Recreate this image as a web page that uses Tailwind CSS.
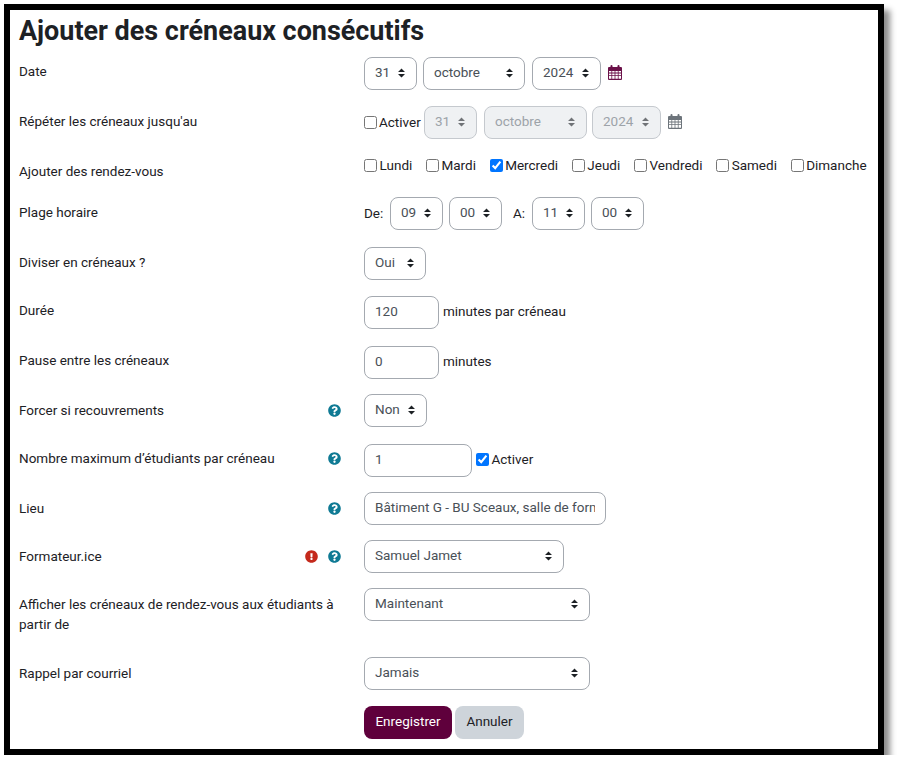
<!DOCTYPE html>
<html lang="fr">
<head>
<meta charset="utf-8">
<title>Ajouter des créneaux consécutifs</title>
<script src="https://cdn.jsdelivr.net/npm/@tailwindcss/browser@4"></script>
</head>
<body class="bg-white font-['Roboto',sans-serif] text-[13.5px] leading-[21px] text-[#1d2125]">
<svg class="hidden">
  <symbol id="arr" viewBox="0 0 7 10"><path d="M3.5 0.5 7 4H0Z M0 6H7L3.5 9.5Z" fill="#1d2125"/></symbol>
  <symbol id="cal" viewBox="0 0 14 15"><path fill="currentColor" fill-rule="evenodd" d="M1 2h1.5V1a1 1 0 0 1 2 0v1h5V1a1 1 0 0 1 2 0v1H13a1 1 0 0 1 1 1v11a1 1 0 0 1-1 1H1a1 1 0 0 1-1-1V3a1 1 0 0 1 1-1Zm0 4v1.6h2.4V6Zm3.2 0v1.6h2.4V6Zm3.2 0v1.6h2.4V6Zm3.2 0v1.6H13V6ZM1 8.4V10h2.4V8.4Zm3.2 0V10h2.4V8.4Zm3.2 0V10h2.4V8.4Zm3.2 0V10H13V8.4ZM1 10.8v1.6h0v1.4h2.4v-3Zm3.2 0v3h2.4v-3Zm3.2 0v3h2.4v-3Zm3.2 0v3H13v-3Z"/></symbol>
  <symbol id="q" viewBox="0 0 512 512"><path fill="#0f7a94" d="M504 256c0 136.997-111.043 248-248 248S8 392.997 8 256C8 119.083 119.043 8 256 8s248 111.083 248 248zM262.655 90c-54.497 0-89.255 22.957-116.549 63.758-3.536 5.286-2.353 12.415 2.715 16.258l34.699 26.31c5.205 3.947 12.621 3.008 16.665-2.122 17.864-22.658 30.113-35.797 57.303-35.797 20.429 0 45.698 13.148 45.698 32.958 0 14.976-12.363 22.667-32.534 33.976C247.128 238.528 216 254.941 216 296v4c0 6.627 5.373 12 12 12h56c6.627 0 12-5.373 12-12v-1.333c0-28.462 83.186-29.647 83.186-106.667 0-58.002-60.165-102-116.531-102zM256 338c-25.365 0-46 20.635-46 46 0 25.364 20.635 46 46 46s46-20.636 46-46c0-25.365-20.635-46-46-46z"/></symbol>
  <symbol id="e" viewBox="0 0 512 512"><path fill="#c4291c" d="M504 256c0 136.997-111.043 248-248 248S8 392.997 8 256C8 119.083 119.043 8 256 8s248 111.083 248 248zm-248 50c-25.405 0-46 20.595-46 46s20.595 46 46 46 46-20.595 46-46-20.595-46-46-46zm-43.673-165.346l7.418 136c.347 6.364 5.609 11.346 11.982 11.346h48.546c6.373 0 11.635-4.982 11.982-11.346l7.418-136c.375-6.874-5.098-12.654-11.982-12.654h-63.383c-6.884 0-12.356 5.78-11.981 12.654z"/></symbol>
</svg>

<div class="ml-[4px] mt-[4px] w-[880px] h-[751px] border-[6px] border-black bg-white pl-[9px] shadow-[6px_6px_6px_rgba(0,0,0,0.45)]">
  <h2 class="h-[47px] pt-[3px] text-[26.95px] leading-[36px] font-bold">Ajouter des créneaux consécutifs</h2>

  <div class="flex h-[49px]">
    <div class="w-[345px] shrink-0 pt-[4px]">Date</div>
    <div class="flex items-start">
      <div class="relative w-[53px] h-[33px]"><select class="appearance-none w-full h-full border border-[#a4a9b0] rounded-[8px] pl-[10px] pb-[2px] text-[#495057] bg-white"><option>31</option></select><svg class="absolute right-[12px] top-[11px] w-[7px] h-[10px]"><use href="#arr"/></svg></div>
      <div class="relative w-[102px] h-[33px] ml-[6px]"><select class="appearance-none w-full h-full border border-[#a4a9b0] rounded-[8px] pl-[10px] pb-[2px] text-[#495057] bg-white"><option>octobre</option></select><svg class="absolute right-[12px] top-[11px] w-[7px] h-[10px]"><use href="#arr"/></svg></div>
      <div class="relative w-[69px] h-[33px] ml-[7px]"><select class="appearance-none w-full h-full border border-[#a4a9b0] rounded-[8px] pl-[10px] pb-[2px] text-[#495057] bg-white"><option>2024</option></select><svg class="absolute right-[12px] top-[11px] w-[7px] h-[10px]"><use href="#arr"/></svg></div>
      <svg class="w-[14px] h-[15px] ml-[7px] mt-[8px] text-[#6b1149]"><use href="#cal"/></svg>
    </div>
  </div>

  <div class="flex h-[49px]">
    <div class="w-[345px] shrink-0 pt-[5px]">Répéter les créneaux jusqu'au</div>
    <div class="flex items-start">
      <label class="flex items-center h-[33px] w-[60px]"><input type="checkbox" class="mr-[2px]">Activer</label>
      <div class="relative w-[53px] h-[33px]"><select disabled class="appearance-none w-full h-full border border-[#c5c9ce] rounded-[8px] pl-[10px] pb-[2px] text-[#9da3a9] bg-[#eff1f3]"><option>31</option></select><svg class="absolute right-[12px] top-[11px] w-[7px] h-[10px] opacity-60"><use href="#arr"/></svg></div>
      <div class="relative w-[103px] h-[33px] ml-[7px]"><select disabled class="appearance-none w-full h-full border border-[#c5c9ce] rounded-[8px] pl-[10px] pb-[2px] text-[#9da3a9] bg-[#eff1f3]"><option>octobre</option></select><svg class="absolute right-[12px] top-[11px] w-[7px] h-[10px] opacity-60"><use href="#arr"/></svg></div>
      <div class="relative w-[69px] h-[33px] ml-[5px]"><select disabled class="appearance-none w-full h-full border border-[#c5c9ce] rounded-[8px] pl-[10px] pb-[2px] text-[#9da3a9] bg-[#eff1f3]"><option>2024</option></select><svg class="absolute right-[12px] top-[11px] w-[7px] h-[10px] opacity-60"><use href="#arr"/></svg></div>
      <svg class="w-[14px] h-[15px] ml-[7px] mt-[8px] text-[#6d747b]"><use href="#cal"/></svg>
    </div>
  </div>

  <div class="flex h-[42px]">
    <div class="w-[345px] shrink-0 pt-[6px]">Ajouter des rendez-vous</div>
    <div class="flex items-start gap-[13.7px]">
      <label class="flex items-center h-[21px]"><input type="checkbox" class="mr-[2.5px]">Lundi</label>
      <label class="flex items-center h-[21px]"><input type="checkbox" class="mr-[2.5px]">Mardi</label>
      <label class="flex items-center h-[21px]"><input type="checkbox" checked class="mr-[2.5px]">Mercredi</label>
      <label class="flex items-center h-[21px]"><input type="checkbox" class="mr-[2.5px]">Jeudi</label>
      <label class="flex items-center h-[21px]"><input type="checkbox" class="mr-[2.5px]">Vendredi</label>
      <label class="flex items-center h-[21px]"><input type="checkbox" class="mr-[2.5px]">Samedi</label>
      <label class="flex items-center h-[21px]"><input type="checkbox" class="mr-[2.5px]">Dimanche</label>
    </div>
  </div>

  <div class="flex h-[50px]">
    <div class="w-[345px] shrink-0 pt-[5px]">Plage horaire</div>
    <div class="flex items-start">
      <span class="h-[33px] w-[26px] pt-[6px]">De:</span>
      <div class="relative w-[53px] h-[33px]"><select class="appearance-none w-full h-full border border-[#a4a9b0] rounded-[8px] pl-[10px] pb-[2px] text-[#495057] bg-white"><option>09</option></select><svg class="absolute right-[12px] top-[11px] w-[7px] h-[10px]"><use href="#arr"/></svg></div>
      <div class="relative w-[53px] h-[33px] ml-[6px]"><select class="appearance-none w-full h-full border border-[#a4a9b0] rounded-[8px] pl-[10px] pb-[2px] text-[#495057] bg-white"><option>00</option></select><svg class="absolute right-[12px] top-[11px] w-[7px] h-[10px]"><use href="#arr"/></svg></div>
      <span class="h-[33px] w-[19px] ml-[11px] pt-[6px]">A:</span>
      <div class="relative w-[53px] h-[33px]"><select class="appearance-none w-full h-full border border-[#a4a9b0] rounded-[8px] pl-[10px] pb-[2px] text-[#495057] bg-white"><option>11</option></select><svg class="absolute right-[12px] top-[11px] w-[7px] h-[10px]"><use href="#arr"/></svg></div>
      <div class="relative w-[53px] h-[33px] ml-[6px]"><select class="appearance-none w-full h-full border border-[#a4a9b0] rounded-[8px] pl-[10px] pb-[2px] text-[#495057] bg-white"><option>00</option></select><svg class="absolute right-[12px] top-[11px] w-[7px] h-[10px]"><use href="#arr"/></svg></div>
    </div>
  </div>

  <div class="flex h-[49px]">
    <div class="w-[345px] shrink-0 pt-[5px]">Diviser en créneaux ?</div>
    <div class="relative w-[62px] h-[33px]"><select class="appearance-none w-full h-full border border-[#a4a9b0] rounded-[8px] pl-[10px] pb-[2px] text-[#495057] bg-white"><option>Oui</option></select><svg class="absolute right-[12px] top-[11px] w-[7px] h-[10px]"><use href="#arr"/></svg></div>
  </div>

  <div class="flex h-[50px]">
    <div class="w-[345px] shrink-0 pt-[4px]">Durée</div>
    <div class="flex items-center h-[33px]">
      <input type="text" value="120" class="w-[75px] h-[33px] border border-[#a4a9b0] rounded-[8px] px-[10px] pb-[3px] text-[#495057]">
      <span class="ml-[4px] mb-[2px]">minutes par créneau</span>
    </div>
  </div>

  <div class="flex h-[48px]">
    <div class="w-[345px] shrink-0 pt-[4px]">Pause entre les créneaux</div>
    <div class="flex items-center h-[33px]">
      <input type="text" value="0" class="w-[75px] h-[33px] border border-[#a4a9b0] rounded-[8px] px-[10px] pb-[3px] text-[#495057]">
      <span class="ml-[4px] mb-[2px]">minutes</span>
    </div>
  </div>

  <div class="flex h-[50px]">
    <div class="w-[345px] shrink-0 pt-[6px] pr-[23px] flex items-start justify-between"><span>Forcer si recouvrements</span><svg class="w-[13px] h-[13px] mt-[4px]"><use href="#q"/></svg></div>
    <div class="relative w-[63px] h-[33px]"><select class="appearance-none w-full h-full border border-[#a4a9b0] rounded-[8px] pl-[10px] pb-[2px] text-[#495057] bg-white"><option>Non</option></select><svg class="absolute right-[12px] top-[11px] w-[7px] h-[10px]"><use href="#arr"/></svg></div>
  </div>

  <div class="flex h-[48px]">
    <div class="w-[345px] shrink-0 pt-[4px] pr-[23px] flex items-start justify-between"><span>Nombre maximum d’étudiants par créneau</span><svg class="w-[13px] h-[13px] mt-[4px]"><use href="#q"/></svg></div>
    <div class="flex items-center h-[33px]">
      <input type="text" value="1" class="w-[108px] h-[33px] border border-[#a4a9b0] rounded-[8px] px-[10px] pb-[3px] text-[#495057]">
      <label class="flex items-center ml-[4px] mb-[2px]"><input type="checkbox" checked class="mr-[2.5px]">Activer</label>
    </div>
  </div>

  <div class="flex h-[48px]">
    <div class="w-[345px] shrink-0 pt-[6px] pr-[23px] flex items-start justify-between"><span>Lieu</span><svg class="w-[13px] h-[13px] mt-[4px]"><use href="#q"/></svg></div>
    <input type="text" value="Bâtiment G - BU Sceaux, salle de formation" class="w-[242px] h-[33px] border border-[#a4a9b0] rounded-[8px] px-[10px] pb-[3px] text-[#495057]">
  </div>

  <div class="flex h-[48px]">
    <div class="w-[345px] shrink-0 pt-[6px] pr-[23px] flex items-start"><span>Formateur.ice</span><svg class="w-[13px] h-[13px] mt-[4px] ml-auto"><use href="#e"/></svg><svg class="w-[13px] h-[13px] mt-[4px] ml-[10px]"><use href="#q"/></svg></div>
    <div class="relative w-[200px] h-[33px]"><select class="appearance-none w-full h-full border border-[#a4a9b0] rounded-[8px] pl-[10px] pb-[2px] text-[#495057] bg-white"><option>Samuel Jamet</option></select><svg class="absolute right-[12px] top-[11px] w-[7px] h-[10px]"><use href="#arr"/></svg></div>
  </div>

  <div class="flex h-[69px]">
    <div class="w-[345px] shrink-0 pt-[6px] pr-[10px] leading-[20px]">Afficher les créneaux de rendez-vous aux étudiants à partir de</div>
    <div class="relative w-[226px] h-[33px]"><select class="appearance-none w-full h-full border border-[#a4a9b0] rounded-[8px] pl-[10px] pb-[2px] text-[#495057] bg-white"><option>Maintenant</option></select><svg class="absolute right-[12px] top-[11px] w-[7px] h-[10px]"><use href="#arr"/></svg></div>
  </div>

  <div class="flex h-[49px]">
    <div class="w-[345px] shrink-0 pt-[6px]">Rappel par courriel</div>
    <div class="relative w-[226px] h-[33px]"><select class="appearance-none w-full h-full border border-[#a4a9b0] rounded-[8px] pl-[10px] pb-[2px] text-[#495057] bg-white"><option>Jamais</option></select><svg class="absolute right-[12px] top-[11px] w-[7px] h-[10px]"><use href="#arr"/></svg></div>
  </div>

  <div class="flex">
    <div class="w-[345px] shrink-0"></div>
    <button class="w-[88px] h-[33px] pb-[2px] rounded-[8px] bg-[#5f003c] text-white">Enregistrer</button>
    <button class="w-[69px] h-[33px] pb-[2px] ml-[3px] rounded-[8px] bg-[#ced4da] text-[#1d2125]">Annuler</button>
  </div>
</div>
</body>
</html>
